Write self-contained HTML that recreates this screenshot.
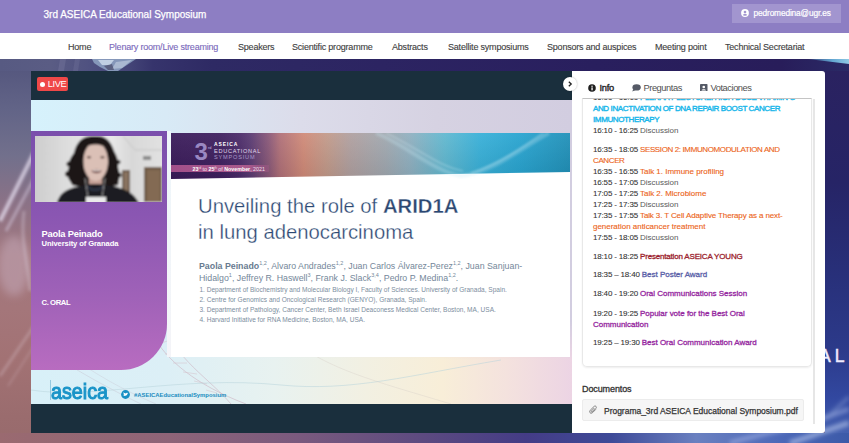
<!DOCTYPE html>
<html><head><meta charset="utf-8">
<style>
*{box-sizing:border-box;margin:0;padding:0}
html,body{width:849px;height:443px;overflow:hidden}
body{position:relative;font-family:"Liberation Sans",sans-serif;background:#2a2058}
.a{position:absolute;white-space:nowrap}
#bg{position:absolute;left:0;top:59px;width:849px;height:384px;overflow:hidden;
 background:linear-gradient(90deg,#5f5b82 0%,#4a4478 20%,#2e2560 60%,#271d5a 100%)}
#hdr{position:absolute;left:0;top:0;width:849px;height:33.5px;background:#8d7ec3;border-bottom:1px solid #8272b9}
#nav{position:absolute;left:0;top:33px;width:849px;height:26px;background:#fff}
.nv{position:absolute;top:41px;font-size:9px;letter-spacing:-0.2px;color:#3e3e3e;line-height:12px;white-space:nowrap;-webkit-text-stroke:.12px #3e3e3e}
#video{position:absolute;left:31px;top:71px;width:541px;height:362px;background:#1a2f3d;overflow:hidden}
#slide{position:absolute;left:0;top:29px;width:541px;height:304px;overflow:hidden;
 background:linear-gradient(90deg,#d6f2fc 0%,#d8eaf6 25%,#dcdcea 50%,#d6d2e2 75%,#d2cde0 100%)}
#panel{position:absolute;left:572px;top:71px;width:253px;height:362px;background:#fff;border-radius:0 3px 3px 0}
.sch{position:absolute;left:10px;top:27px;width:230px;height:269px;border:1px solid #e8e8e8;border-top:1px solid #c4c4c4;border-radius:0 0 5px 5px;overflow:hidden;box-shadow:0 1px 2px rgba(0,0,0,.07)}
.ln{position:absolute;left:10px;font-size:8px;line-height:11px;letter-spacing:-0.02px;color:#333;white-space:nowrap}
.ln .t{letter-spacing:-0.17px;-webkit-text-stroke:.08px #333}
.m{-webkit-text-stroke:.3px currentColor}
.cp{letter-spacing:-0.38px;-webkit-text-stroke:.4px currentColor}
.t{color:#333}
.d{color:#5a5a5a}
.cy{color:#18b6ea}
.or{color:#ec6420;-webkit-text-stroke:.12px #ec6420}
.dr{color:#9c1f2e}
.bp{color:#5a5fa8}
.pu{color:#9527a0}
.au{left:168px;font-size:8.8px;line-height:12px;color:#74879a}
.au b{color:#687b90}
.au sup{font-size:5.5px;vertical-align:0;position:relative;top:-3.5px}
.af{left:168.4px;font-size:6.55px;line-height:8px;color:#7d8ea0}
</style></head><body>
<div id="bg">
  <div class="a" style="left:0;top:0;width:849px;height:12px;background:linear-gradient(90deg,#575a82 0%,#5a5c84 6%,#4e5080 11%,#454678 15%,#36346c 18%,#2e2a64 25%,#2c2462 45%,#291f5e 70%,#281d5a 92%,#2a2a66 100%)"></div>
  <svg class="a" style="left:0;top:0" width="160" height="12" viewBox="0 0 160 12"><defs><filter id="cb"><feGaussianBlur stdDeviation=".6"/></filter></defs><g filter="url(#cb)"><path d="M92 0 L 136 0 L 130 4 L 124 8 L 118 12 L 108 12 L 100 8 L 94 4 Z" fill="#8fa4c4" opacity=".85"/><path d="M98 1 L 114 1 L 110 6 L 102 6 Z" fill="#c8d6e8" opacity=".9"/><path d="M116 3 L 132 1 L 122 9 L 112 10 Z" fill="#b4c2d8" opacity=".8"/><path d="M104 7 L 112 5 L 114 11 L 108 11 Z" fill="#4a4a6a" opacity=".7"/></g><path d="M60 0 L 66 0 L 64 12 L 58 12 Z" fill="#8a8cb0" opacity=".25"/><path d="M75 0 L 80 0 L 78 12 L 73 12 Z" fill="#8a8cb0" opacity=".2"/></svg>
  <div class="a" style="left:808px;top:0;width:41px;height:5px;clip-path:polygon(0 0,100% 0,100% 100%);background:linear-gradient(90deg,rgba(110,190,230,.2) 0%,rgba(110,190,230,.85) 60%,rgba(150,210,235,.95) 100%)"></div>
  <svg class="a" style="left:0;top:12px" width="32" height="384" viewBox="0 0 32 384">
    <defs>
      <linearGradient id="lg" x1="0" y1="0" x2="0" y2="1">
        <stop offset="0" stop-color="#56587f"/>
        <stop offset=".1" stop-color="#626487"/>
        <stop offset=".22" stop-color="#72708c"/>
        <stop offset=".35" stop-color="#8c7286"/>
        <stop offset=".48" stop-color="#a2787e"/>
        <stop offset=".62" stop-color="#a4767a"/>
        <stop offset=".75" stop-color="#a27274"/>
        <stop offset=".9" stop-color="#9a6c6e"/>
        <stop offset="1" stop-color="#976a6c"/>
      </linearGradient>
      <filter id="bl" x="-50%" y="-50%" width="200%" height="200%"><feGaussianBlur stdDeviation="1.6"/></filter>
      <filter id="bl2" x="-50%" y="-50%" width="200%" height="200%"><feGaussianBlur stdDeviation="4"/></filter>
    </defs>
    <rect width="32" height="384" fill="url(#lg)"/>
    <ellipse cx="14" cy="195" rx="16" ry="30" fill="#c4a8b8" opacity=".55" filter="url(#bl2)"/>
    <g filter="url(#bl)">
      <path d="M34 82 L 0 150" stroke="#e4dcee" stroke-width="4" opacity=".75"/>
      <path d="M34 108 L 6 160" stroke="#d8cce0" stroke-width="3" opacity=".5"/>
      <path d="M24 140 C 20 170, 28 190, 30 220" stroke="#d8c8d8" stroke-width="3" opacity=".4" fill="none"/>
      <path d="M34 255 L 0 305" stroke="#d8c0c8" stroke-width="3" opacity=".35"/>
      <path d="M34 275 L 8 315" stroke="#d8c0c8" stroke-width="2" opacity=".25"/>
    </g>
  </svg>
  <div class="a" style="left:825px;top:12px;width:24px;height:372px;background:linear-gradient(180deg,#2a2260 0%,#262466 30%,#28307a 55%,#2c3a8a 75%,#3248a0 88%,#4a68b4 100%)"></div>
  <div class="a" style="left:0;top:374px;width:849px;height:10px;background:linear-gradient(90deg,#9a6a70 0%,#8e6478 20%,#7a5a7e 35%,#5c4a80 50%,#443c86 62%,#3e4a98 72%,#6a80c0 82%,#4c68b8 92%,#3c5aa8 100%)"></div>
  <svg class="a" style="left:560px;top:330px" width="289" height="54" viewBox="0 0 289 54"><defs><filter id="bs"><feGaussianBlur stdDeviation="2"/></filter></defs><g filter="url(#bs)" fill="none"><path d="M170 54 C 200 44, 240 40, 289 20" stroke="#a8b8e8" stroke-width="4" opacity=".6"/><path d="M230 54 C 250 48, 270 40, 289 34" stroke="#c0cef0" stroke-width="5" opacity=".6"/><path d="M265 30 C 275 22, 282 14, 289 8" stroke="#8fa4d8" stroke-width="3" opacity=".5"/></g></svg>
  <div class="a" style="left:819px;top:287.5px;font-size:17.5px;line-height:18px;color:#eeeafc;letter-spacing:4.2px;-webkit-text-stroke:.5px #eeeafc">AL</div>
</div>
<div id="hdr">
  <div class="a" style="left:43.5px;top:7.5px;font-size:10px;color:#fff;line-height:13px;-webkit-text-stroke:.25px #fff">3rd ASEICA Educational Symposium</div>
  <div class="a" style="left:732px;top:4px;width:109px;height:19px;background:#a295cf"></div>
  <svg class="a" style="left:741px;top:9.3px" width="8" height="8" viewBox="0 0 8 8"><circle cx="4" cy="4" r="3.9" fill="#fff"/><circle cx="4" cy="3.1" r="1.3" fill="#a295cf"/><path d="M1.7 6.1 C 2.3 4.6, 5.7 4.6, 6.3 6.1 C 5.5 7, 2.5 7, 1.7 6.1 Z" fill="#a295cf"/></svg>
  <div class="a" style="left:753.5px;top:7.5px;font-size:8.3px;color:#fff;line-height:11px;letter-spacing:-0.12px;-webkit-text-stroke:.2px #fff">pedromedina@ugr.es</div>
</div>
<div id="nav"></div>
<div class="nv" style="left:68px">Home</div>
<div class="nv" style="left:109px;color:#7a69bb;-webkit-text-stroke:.12px #7a69bb">Plenary room/Live streaming</div>
<div class="nv" style="left:238px">Speakers</div>
<div class="nv" style="left:292px">Scientific programme</div>
<div class="nv" style="left:392px">Abstracts</div>
<div class="nv" style="left:448px">Satellite symposiums</div>
<div class="nv" style="left:547px">Sponsors and auspices</div>
<div class="nv" style="left:655px">Meeting point</div>
<div class="nv" style="left:725px">Technical Secretariat</div>

<div id="video">
  <div class="a" style="left:6px;top:6px;width:31px;height:14px;background:#ef4848;border-radius:2px"></div>
  <div class="a" style="left:9px;top:11px;width:5px;height:5px;background:#fff;border-radius:50%"></div>
  <div class="a" style="left:16.8px;top:8px;font-size:9.3px;line-height:11px;color:#fff;letter-spacing:-0.4px">LIVE</div>
  <div id="slide">
    <div class="a" style="left:0;top:220px;width:541px;height:84px;background:linear-gradient(90deg,#d8f0f8 0%,#dceff6 25%,#e8f2f0 45%,#f2f0e2 62%,#f8eed8 76%,#f4e2de 88%,#ecd4e4 100%);-webkit-mask-image:linear-gradient(180deg,rgba(0,0,0,0) 0,#000 40px)"></div>
    <svg class="a" style="left:0;top:180px" width="541" height="124" viewBox="0 0 541 124">
      <g fill="none" stroke-width=".9">
        <path d="M122 55 C 135 80, 165 105, 215 124" stroke="#cdb8c4" opacity=".7"/>
        <path d="M138 48 C 140 75, 180 100, 200 124" stroke="#cdb8c4" opacity=".7"/>
        <path d="M128 64 L 139 60 M 134 74 L 146 72 M 142 83 L 156 83 M 152 92 L 166 94 M 163 101 L 176 104 M 175 110 L 186 113" stroke="#d4c4cc" opacity=".6"/>
        <path d="M0 110 C 60 120, 150 95, 250 105 C 320 112, 380 95, 470 80" stroke="#b8d4dc" opacity=".6"/>
        <path d="M0 62 C 30 80, 60 100, 110 124" stroke="#c8c8d4" opacity=".55"/>
        <path d="M10 55 C 50 85, 80 105, 125 124" stroke="#c8c8d4" opacity=".45"/>
        <path d="M260 60 C 300 90, 340 100, 420 124" stroke="#d8d0c8" opacity=".45"/>
      </g>
    </svg>
    <!-- purple card -->
    <div class="a" style="left:0;top:31px;width:136px;height:239px;border-radius:0 0 46px 0;background:linear-gradient(180deg,#7a4fac 0%,#8a56b2 35%,#a062b8 70%,#b86cc0 100%)"></div>
    <div class="a" style="left:136px;top:31px;width:4px;height:226px;background:linear-gradient(180deg,#eef6fa,#f4f4f8)"></div>
    <svg class="a" style="left:4px;top:36px" width="127" height="66" viewBox="0 0 127 66">
      <defs>
        <linearGradient id="wall" x1="0" y1="0" x2="1" y2="0">
          <stop offset="0" stop-color="#cdcdcd"/>
          <stop offset=".3" stop-color="#e0e0e0"/>
          <stop offset=".6" stop-color="#e8e8e8"/>
          <stop offset=".75" stop-color="#d8d8d8"/>
          <stop offset="1" stop-color="#e2e2e2"/>
        </linearGradient>
      </defs>
      <filter id="pb" x="-5%" y="-5%" width="110%" height="110%"><feGaussianBlur stdDeviation=".8"/></filter>
      <g filter="url(#pb)">
      <rect x="-2" y="-2" width="131" height="70" fill="url(#wall)"/>
      <path d="M88 0 L100 14 L127 14" stroke="#c4c4c4" stroke-width="1" fill="none"/>
      <rect x="87" y="34" width="8" height="32" fill="#6a5848"/>
      <rect x="89" y="36" width="4" height="30" fill="#8a7460"/>
      <rect x="109" y="31" width="18" height="35" fill="#6e5a46"/>
      <rect x="112" y="34" width="13" height="32" fill="#836a52"/>
      <rect x="108" y="20" width="8" height="4" fill="#8a8a8a"/>
      <!-- hair -->
      <path d="M59 0 C 52 0, 47 2, 44 6 C 41 9, 40 13, 39 17 C 36 21, 33 26, 34 31 C 32 36, 32 41, 35 45 C 37 49, 42 51, 47 50 L 75 50 C 79 51, 83 48, 84 44 C 85 40, 84 35, 83 31 C 84 26, 82 20, 79 15 C 77 9, 74 4, 70 2 C 67 0, 63 0, 59 0 Z" fill="#1c1616"/>
      <circle cx="34" cy="28" r="2.5" fill="#1c1616"/><circle cx="33" cy="38" r="2.8" fill="#1c1616"/><circle cx="83.5" cy="26" r="2" fill="#1c1616"/><circle cx="84" cy="39" r="2.5" fill="#1c1616"/><circle cx="39" cy="47" r="2.5" fill="#1c1616"/><circle cx="81" cy="47" r="2.5" fill="#1c1616"/>
      <!-- neck -->
      <rect x="54" y="40" width="13" height="13" fill="#c4a096"/>
      <!-- face -->
      <ellipse cx="60.7" cy="25.5" rx="12.3" ry="19.5" fill="#dbc0b6"/>
      <path d="M47 14 C 50 6, 57 3, 63 4 C 69 5, 73 9, 74.5 15 C 71 10, 65 8, 59 8.5 C 53 9, 49 11, 47 14 Z" fill="#1c1616"/>
      <ellipse cx="54" cy="21.3" rx="2.2" ry="1.1" fill="#5a4440"/>
      <ellipse cx="67.4" cy="21.3" rx="2.2" ry="1.1" fill="#5a4440"/>
      <path d="M56.5 35 C 58.5 33, 64.5 33, 66.5 35 C 64.5 38, 58.5 38, 56.5 35 Z" fill="#6a3a3a"/>
      <rect x="58" y="33.8" width="7" height="1.3" fill="#e8e0dc"/>
      <!-- body -->
      <path d="M22 67 C 24 58, 30 54, 40 51 C 46 50, 50 49, 54 48 L 67 48 C 72 49, 80 50, 88 53 C 96 56, 100 60, 104 67 Z" fill="#1a1a20"/>
      <path d="M53 50 C 55 55, 65 55, 68 50" stroke="#2a3040" stroke-width="3" fill="none"/>
      <rect x="51" y="61" width="20" height="6" fill="#eaeaea"/>
      <path d="M50 42 L 53 61 M 70 42 L 67 61" stroke="#cfcfcf" stroke-width=".7"/>
    </g>
    </svg>
    <div class="a" style="left:10.5px;top:129px;font-size:9.3px;font-weight:bold;color:#fff;line-height:11px;letter-spacing:-0.2px">Paola Peinado</div>
    <div class="a" style="left:10.5px;top:138.5px;font-size:7.6px;font-weight:bold;color:#fff;line-height:9px;letter-spacing:-0.1px">University of Granada</div>
    <div class="a" style="left:10.5px;top:197.5px;font-size:7.7px;font-weight:bold;color:#fff;line-height:9px;letter-spacing:-0.4px">C. ORAL</div>
    <!-- slide white -->
    <div class="a" style="left:140px;top:33px;width:399px;height:224px;background:#fff"></div>
    <div class="a" style="left:140px;top:33px;width:399px;height:46px;clip-path:polygon(0 0,100% 0,100% 39px,0 46px);background:linear-gradient(180deg,rgba(255,255,255,.06),rgba(0,0,0,.08)),linear-gradient(90deg,#3a1b5a 0%,#3e1f5e 12%,#4a2a68 17%,#5a3a72 20%,#8a5878 24.5%,#b07078 27.3%,#d08a78 33.2%,#c29a8a 39.1%,#b0a0a0 45%,#a0a8b0 53.9%,#90b0c0 59.8%,#60b8d0 68.7%,#38b0d8 77.4%,#28a4d0 87.5%,#2090b8 100%)"></div>
    <svg class="a" style="left:140px;top:33px" width="399" height="46" viewBox="0 0 399 46">
      <defs><filter id="dn"><feGaussianBlur stdDeviation="1.2"/></filter></defs>
      <g fill="none" filter="url(#dn)">
        <path d="M205 0 C 235 12, 262 38, 290 43 C 320 40, 350 15, 378 0" stroke="#c8eaf4" stroke-width="4" opacity=".28"/>
        <path d="M215 0 C 245 14, 268 34, 292 38" stroke="#d8f0f8" stroke-width="1.2" opacity=".45"/>
        <path d="M300 40 C 330 30, 355 12, 372 0" stroke="#d8f0f8" stroke-width="1.2" opacity=".4"/>
      </g>
    </svg>
    <div class="a" style="left:140px;top:64.5px;width:98px;height:7px;background:linear-gradient(90deg,#a2508a 0%,#aa5a8c 80%,rgba(170,90,140,.3) 100%)"></div>
    <div class="a" style="left:161.5px;top:64.5px;font-size:5.3px;line-height:7px;color:#f0e0f0;letter-spacing:0px"><b style="color:#fff">23</b><span style="font-size:3px;vertical-align:2px">rd</span> to <b style="color:#fff">25</b><span style="font-size:3px;vertical-align:2px">th</span> of <b style="color:#fff">November</b>, 2021</div>
    <div class="a" style="left:163.5px;top:37.5px;font-size:24px;line-height:27px;font-weight:bold;color:#9a88c2">3</div>
    <div class="a" style="left:177px;top:45px;font-size:4px;line-height:5px;color:#c8b8e0">rd</div>
    <div class="a" style="left:183px;top:41px;font-size:5px;line-height:6px;font-weight:bold;color:#fff;letter-spacing:.9px">ASEICA</div>
    <div class="a" style="left:183px;top:47.5px;font-size:5.6px;line-height:6px;color:#e0d8ec;letter-spacing:.7px">EDUCATIONAL</div>
    <div class="a" style="left:183px;top:54px;font-size:5.6px;line-height:6px;color:#a898c8;letter-spacing:.8px">SYMPOSIUM</div>
    <div class="a" style="left:167px;top:94px;font-size:20.3px;line-height:24px;color:#2c4872;-webkit-text-stroke:.3px #fff">Unveiling the role of <b>ARID1A</b></div>
    <div class="a" style="left:167px;top:120px;font-size:20.3px;line-height:24px;color:#2c4872;-webkit-text-stroke:.3px #fff">in lung adenocarcinoma</div>
    <div class="a au" style="top:159.5px"><b>Paola Peinado</b><sup>1,2</sup>, Alvaro Andrades<sup>1,2</sup>, Juan Carlos Álvarez-Perez<sup>1,2</sup>, Juan Sanjuan-</div>
    <div class="a au" style="top:171.6px">Hidalgo<sup>1</sup>, Jeffrey R. Haswell<sup>3</sup>, Frank J. Slack<sup>3,4</sup>, Pedro P. Medina<sup>1,2</sup>.</div>
    <div class="a af" style="top:185.6px">1. Department of Biochemistry and Molecular Biology I, Faculty of Sciences. University of Granada, Spain.</div>
    <div class="a af" style="top:196.2px">2. Centre for Genomics and Oncological Research (GENYO), Granada, Spain.</div>
    <div class="a af" style="top:206.3px">3. Department of Pathology, Cancer Center, Beth Israel Deaconess Medical Center, Boston, MA, USA.</div>
    <div class="a af" style="top:215.5px">4. Harvard Initiative for RNA Medicine, Boston, MA, USA.</div>
    <!-- logo -->
    <div class="a" style="left:19.5px;top:279px;font-size:22.7px;line-height:24px;color:#1a94c8;transform:scaleX(.87);transform-origin:0 0;-webkit-text-stroke:1.1px #1a94c8">aseica</div>
    <div class="a" style="left:19px;top:280px;width:1px;height:20px;background:#6ab0d0;opacity:.6"></div>
    <svg class="a" style="left:89.5px;top:290px" width="9" height="9" viewBox="0 0 9 9"><circle cx="4.5" cy="4.5" r="4.4" fill="#1790c4"/><path d="M2 5.8 C 3.5 6.5, 6 6, 6.6 3.6 L 7.2 3 L 6.6 3.1 C 6.3 2.5, 5.3 2.4, 5 3.4 C 4 3.4, 3 2.9, 2.4 2.3 C 2.2 3, 2.6 3.7, 3 4 L 2.5 3.9 C 2.6 4.5, 3.1 4.9, 3.5 5 C 3.2 5.3, 2.6 5.6, 2 5.8 Z" fill="#fff"/></svg>
    <div class="a" style="left:103px;top:291.5px;font-size:5.9px;font-weight:bold;line-height:7px;color:#1a8cc0">#ASEICAEducationalSymposium</div>
  </div>
</div>

<div id="panel">
  <svg class="a" style="left:16px;top:12.5px" width="8" height="8" viewBox="0 0 8 8"><circle cx="4" cy="4" r="3.8" fill="#1e1e1e"/><rect x="3.4" y="3.4" width="1.3" height="2.9" fill="#fff"/><circle cx="4.05" cy="2.2" r=".7" fill="#fff"/></svg>
  <div class="a" style="left:27.5px;top:11.7px;font-size:9.3px;line-height:11px;color:#222;letter-spacing:-0.25px;-webkit-text-stroke:.35px #222">Info</div>
  <svg class="a" style="left:59.5px;top:83.5px;top:12.5px" width="9" height="8" viewBox="0 0 9 8"><ellipse cx="4.6" cy="3.4" rx="4.2" ry="3.1" fill="#555a66"/><path d="M1.2 5 L0.3 7.6 L3.2 6.2 Z" fill="#555a66"/></svg>
  <div class="a" style="left:71.5px;top:11.7px;font-size:9.3px;line-height:11px;color:#505050;letter-spacing:-0.45px">Preguntas</div>
  <svg class="a" style="left:128px;top:12.5px" width="7.5" height="7.5" viewBox="0 0 8 8"><rect width="8" height="8" rx=".8" fill="#555a66"/><circle cx="4" cy="3.2" r="1.4" fill="#fff"/><path d="M1.6 7 C 2 5, 6 5, 6.4 7 Z" fill="#fff"/></svg>
  <div class="a" style="left:138.5px;top:11.7px;font-size:9.3px;line-height:11px;color:#505050;letter-spacing:-0.45px">Votaciones</div>
  <div class="a" style="left:240.5px;top:28px;width:2px;height:325px;background:#e6e6e6"></div>
  <div class="sch">
    <div class="ln" style="top:-7px"><span class="t">16:00 - 16:10 </span><span class="cp cy">PLENARY LECTURE: HIGH-DOSE VITAMIN C</span></div>
    <div class="ln" style="top:4px"><span class="cp cy">AND INACTIVATION OF DNA REPAIR BOOST CANCER</span></div>
    <div class="ln" style="top:15px"><span class="cp cy">IMMUNOTHERAPY</span></div>
    <div class="ln" style="top:26px"><span class="t">16:10 - 16:25 </span><span class="d">Discussion</span></div>
    <div class="ln" style="top:45px"><span class="t">16:35 - 18:05 </span><span class="cp or">SESSION 2: IMMUNOMODULATION AND</span></div>
    <div class="ln" style="top:56px"><span class="cp or">CANCER</span></div>
    <div class="ln" style="top:67px"><span class="t">16:35 - 16:55 </span><span class="or">Talk 1. Immune profiling</span></div>
    <div class="ln" style="top:78px"><span class="t">16:55 - 17:05 </span><span class="d">Discussion</span></div>
    <div class="ln" style="top:89px"><span class="t">17:05 - 17:25 </span><span class="or">Talk 2. Microbiome</span></div>
    <div class="ln" style="top:100px"><span class="t">17:25 - 17:35 </span><span class="d">Discussion</span></div>
    <div class="ln" style="top:111px"><span class="t">17:35 - 17:55 </span><span class="or" style="letter-spacing:-0.12px">Talk 3. T Cell Adaptive Therapy as a next-</span></div>
    <div class="ln" style="top:122px"><span class="or">generation anticancer treatment</span></div>
    <div class="ln" style="top:133px"><span class="t">17:55 - 18:05 </span><span class="d">Discussion</span></div>
    <div class="ln" style="top:152px"><span class="t">18:10 - 18:25 </span><span class="m dr" style="letter-spacing:-0.18px">Presentation ASEICA YOUNG</span></div>
    <div class="ln" style="top:170px"><span class="t">18:35 – 18:40 </span><span class="m bp">Best Poster Award</span></div>
    <div class="ln" style="top:189px"><span class="t">18:40 - 19:20 </span><span class="m pu">Oral Communications Session</span></div>
    <div class="ln" style="top:209px"><span class="t m">19:20 - 19:25 </span><span class="m pu">Popular vote for the Best Oral</span></div>
    <div class="ln" style="top:220px"><span class="m pu">Communication</span></div>
    <div class="ln" style="top:238px"><span class="t m">19:25 – 19:30 </span><span class="m pu">Best Oral Communication Award</span></div>
  </div>
  <div class="a" style="left:10px;top:312.5px;font-size:9px;line-height:11px;color:#333;-webkit-text-stroke:.3px #333;letter-spacing:-0.1px">Documentos</div>
  <div class="a" style="left:10px;top:328px;width:222px;height:22px;background:#f6f6f6;border:1px solid #ececec;border-radius:2px"></div>
  <svg class="a" style="left:17px;top:334px" width="9" height="10" viewBox="0 0 9 10"><path d="M6.8 4.4 L 3.6 7.6 C 2.8 8.4, 1.6 8.4, 1 7.7 C 0.4 7, 0.5 6, 1.2 5.3 L 5 1.5 C 5.6 .9, 6.5 .9, 7 1.4 C 7.5 1.9, 7.5 2.8, 6.9 3.4 L 3.4 6.9 C 3.1 7.2, 2.6 7.2, 2.4 6.9 C 2.1 6.6, 2.2 6.2, 2.5 5.9 L 5.4 3" stroke="#777" stroke-width=".9" fill="none"/></svg>
  <div class="a" style="left:32px;top:334.5px;font-size:8.5px;line-height:11px;color:#333;letter-spacing:-0.02px;-webkit-text-stroke:.25px #333">Programa_3rd ASEICA Educational Symposium.pdf</div>
</div>
<div class="a" style="left:563px;top:77px;width:14px;height:14px;border-radius:50%;background:#fff;box-shadow:0 0 2px rgba(0,0,0,.3)"></div>
<svg class="a" style="left:567px;top:81px" width="6" height="6" viewBox="0 0 6 6"><path d="M1.8 .8 L4.2 3 L1.8 5.2" stroke="#222" stroke-width="1.3" fill="none"/></svg>
</body></html>
